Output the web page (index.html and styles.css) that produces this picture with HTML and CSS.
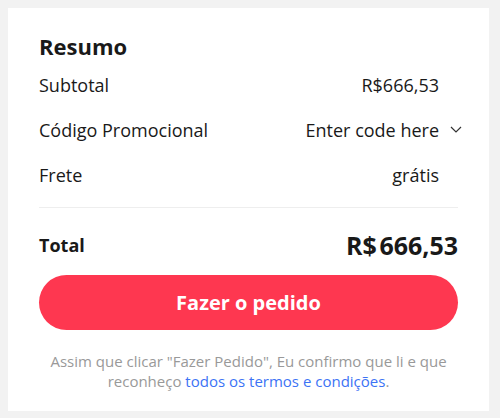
FILE: index.html
```html
<!DOCTYPE html>
<html lang="pt-BR">
<head>
    <meta charset="UTF-8">
    <meta name="viewport" content="width=device-width, initial-scale=1.0">
    <title>Resumo do pedido</title>
    <link rel="stylesheet" href="styles.css">
</head>
<body>
    <div class="summary">
        <h2>Resumo</h2>

        <div class="row">
            <span>Subtotal</span>
            <span class="value">R$666,53</span>
        </div>
        <div class="row">
            <span>Código Promocional</span>
            <span class="value promo">
                Enter code here
                <svg class="chevron" width="12" height="7" viewBox="0 0 12 7">
                    <path d="M1 1l5 5 5-5" fill="none" stroke="#333" stroke-width="1.2"/>
                </svg>
            </span>
        </div>
        <div class="row">
            <span>Frete</span>
            <span class="value">grátis</span>
        </div>

        <div class="divider"></div>

        <div class="total">
            <span>Total</span>
            <span class="total-price">R$&#8202;666,53</span>
        </div>

        <button class="order-btn">Fazer o pedido</button>

        <p class="terms">
            Assim que clicar "Fazer Pedido", Eu confirmo que li e que
            reconheço <a href="#">todos os termos e condições</a>.
        </p>
    </div>
</body>
</html>
```

FILE: styles.css
```css
body {
    margin: 8px;
    font-family: 'Open Sans', sans-serif;
    background-color: #f2f2f2;
    color: #191919;
}
.summary {
    width: 481px;
    box-sizing: border-box;
    padding: 23px 31px 20px;
    background-color: #fff;
}
.summary h2 {
    margin: 0 0 1px;
    font-size: 22px;
    line-height: 30px;
    font-weight: 700;
}
.row {
    display: flex;
    justify-content: space-between;
    align-items: center;
    height: 45px;
    font-size: 18px;
}
.row .value {
    padding-right: 19px;
}
.row .promo {
    position: relative;
}
.chevron {
    position: absolute;
    right: -4px;
    top: 50%;
    margin-top: -4px;
}
.divider {
    height: 1px;
    margin-top: 10px;
    background-color: #eee;
}
.total {
    display: flex;
    justify-content: space-between;
    align-items: center;
    height: 40px;
    margin-top: 17px;
    font-size: 18px;
    font-weight: 700;
}
.total-price {
    font-size: 25px;
    font-weight: 700;
}
.order-btn {
    display: block;
    width: 100%;
    height: 55px;
    margin-top: 10px;
    border: none;
    border-radius: 28px;
    background-color: #fe3750;
    color: #fff;
    font-family: 'Open Sans', sans-serif;
    font-size: 20px;
    font-weight: 700;
    cursor: pointer;
}
.terms {
    margin: 21px 0 0;
    text-align: center;
    font-size: 15px;
    line-height: 20px;
    color: #999;
}
.terms a {
    color: #3c73f5;
    text-decoration: none;
}
```
